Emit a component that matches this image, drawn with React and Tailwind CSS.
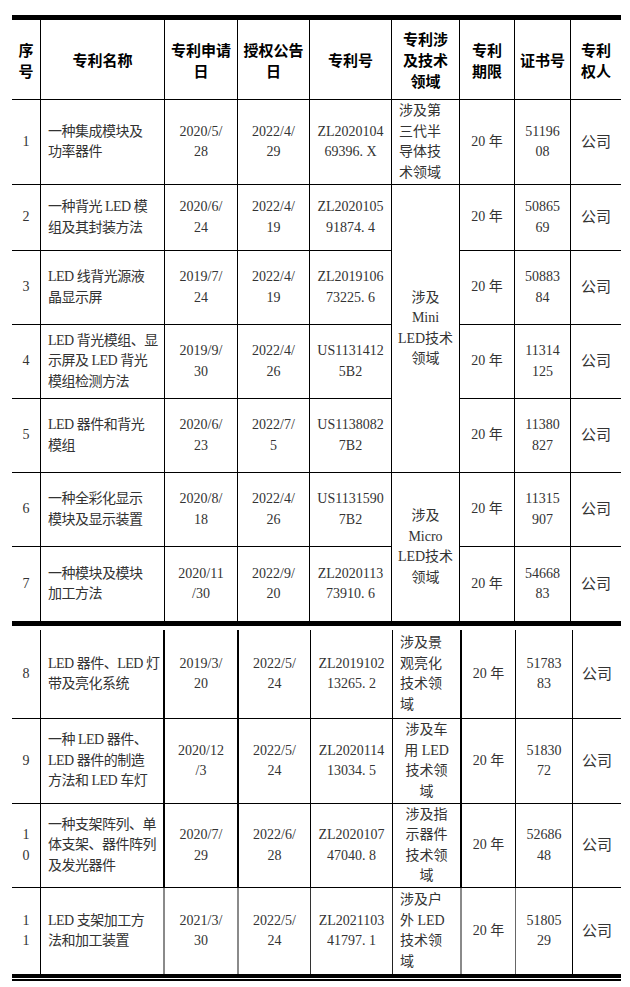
import React from 'react';

// patent list, split in two tables like the source page
const serif = "font-['Liberation_Serif','Noto_Sans_CJK_SC',serif]";

const head = [
  ['序', '号'],
  ['专利名称'],
  ['专利申请', '日'],
  ['授权公告', '日'],
  ['专利号'],
  ['专利涉', '及技术', '领域'],
  ['专利', '期限'],
  ['证书号'],
  ['专利', '权人'],
];

const topRows = [
  {
    no: ['1'], name: ['一种集成模块及', '功率器件'], apply: ['2020/5/', '28'], grant: ['2022/4/', '29'],
    num: ['ZL2020104', '69396. X'], field: { lines: ['涉及第', '三代半', '导体技', '术领域'], span: 1, left: true }, cert: ['51196', '08'],
  },
  {
    no: ['2'], name: ['一种背光 LED 模', '组及其封装方法'], apply: ['2020/6/', '24'], grant: ['2022/4/', '19'],
    num: ['ZL2020105', '91874. 4'], field: { lines: ['涉及', 'Mini', 'LED技术', '领域'], span: 4 }, cert: ['50865', '69'],
  },
  {
    no: ['3'], name: ['LED 线背光源液', '晶显示屏'], apply: ['2019/7/', '24'], grant: ['2022/4/', '19'],
    num: ['ZL2019106', '73225. 6'], field: null, cert: ['50883', '84'],
  },
  {
    no: ['4'], name: ['LED 背光模组、显', '示屏及 LED 背光', '模组检测方法'], apply: ['2019/9/', '30'], grant: ['2022/4/', '26'],
    num: ['US1131412', '5B2'], field: null, cert: ['11314', '125'],
  },
  {
    no: ['5'], name: ['LED 器件和背光', '模组'], apply: ['2020/6/', '23'], grant: ['2022/7/', '5'],
    num: ['US1138082', '7B2'], field: null, cert: ['11380', '827'],
  },
  {
    no: ['6'], name: ['一种全彩化显示', '模块及显示装置'], apply: ['2020/8/', '18'], grant: ['2022/4/', '26'],
    num: ['US1131590', '7B2'], field: { lines: ['涉及', 'Micro', 'LED技术', '领域'], span: 2 }, cert: ['11315', '907'],
  },
  {
    no: ['7'], name: ['一种模块及模块', '加工方法'], apply: ['2020/11', '/30'], grant: ['2022/9/', '20'],
    num: ['ZL2020113', '73910. 6'], field: null, cert: ['54668', '83'],
  },
];

const bottomRows = [
  {
    no: ['8'], name: ['LED 器件、LED 灯', '带及亮化系统'], apply: ['2019/3/', '20'], grant: ['2022/5/', '24'],
    num: ['ZL2019102', '13265. 2'], field: { lines: ['涉及景', '观亮化', '技术领', '域'], span: 1, left: true }, cert: ['51783', '83'],
  },
  {
    no: ['9'], name: ['一种 LED 器件、', 'LED 器件的制造', '方法和 LED 车灯'], apply: ['2020/12', '/3'], grant: ['2022/5/', '24'],
    num: ['ZL2020114', '13034. 5'], field: { lines: ['涉及车', '用 LED', '技术领', '域'], span: 1 }, cert: ['51830', '72'],
  },
  {
    no: ['1', '0'], name: ['一种支架阵列、单', '体支架、器件阵列', '及发光器件'], apply: ['2020/7/', '29'], grant: ['2022/6/', '28'],
    num: ['ZL2020107', '47040. 8'], field: { lines: ['涉及指', '示器件', '技术领', '域'], span: 1 }, cert: ['52686', '48'],
  },
  {
    no: ['1', '1'], name: ['LED 支架加工方', '法和加工装置'], apply: ['2021/3/', '30'], grant: ['2022/5/', '24'],
    num: ['ZL2021103', '41797. 1'], field: { lines: ['涉及户', '外 LED', '技术领', '域'], span: 1, left: true }, cert: ['51805', '29'],
  },
];

const Lines = ({ lines }) => (
  <div className="whitespace-nowrap">
    {lines.map((l, i) => (
      <div key={i}>{l}</div>
    ))}
  </div>
);

// one grid cell, borders drawn on right / bottom
const Cell = ({ lines, left, line, last, edge, extra = '' }) => (
  <div
    className={[
      'flex items-center',
      left ? 'justify-start pl-[7px] text-left' : 'justify-center text-center',
      last ? '' : 'border-b border-black',
      edge ? '' : line,
      extra,
    ].join(' ')}
  >
    <Lines lines={lines} />
  </div>
);

const Body = ({ rows, lines }) =>
  rows.map((r, i) => {
    const last = i === rows.length - 1;
    const endsLast = (span) => i + span === rows.length;
    return (
      <React.Fragment key={i}>
        <Cell lines={r.no} line={lines[0]} last={last} />
        <Cell lines={r.name} left line={lines[1]} last={last} extra="tracking-[-0.5px]" />
        <Cell lines={r.apply} line={lines[2]} last={last} />
        <Cell lines={r.grant} line={lines[3]} last={last} />
        <Cell lines={r.num} line={lines[4]} last={last} />
        {r.field && (
          <Cell
            lines={r.field.lines}
            left={r.field.left}
            line={lines[5]}
            last={endsLast(r.field.span)}
            extra={r.field.span === 4 ? 'row-span-4' : r.field.span === 2 ? 'row-span-2' : ''}
          />
        )}
        <Cell lines={['20 年']} line={lines[6]} last={last} />
        <Cell lines={r.cert} line={lines[7]} last={last} />
        <Cell lines={['公司']} edge last={last} extra="text-[15px]" />
      </React.Fragment>
    );
  });

const topLines = Array(8).fill('border-r border-black');
const bottomLines = [
  'border-r border-black',
  'border-r-2 border-[#8a8a8a]',
  'border-r-2 border-[#8a8a8a]',
  'border-r border-[#333]',
  'border-r border-[#222]',
  'border-r-2 border-[#8a8a8a]',
  'border-r border-[#666]',
  'border-r border-black',
];

export default function App() {
  return (
    <div className={`min-h-[987px] bg-white pl-[12px] pt-[15px] text-[14px] leading-[20.5px] text-[#333] ${serif}`}>
      <div className="w-[609px]">
        <div className="grid grid-cols-[29px_124px_73px_72px_82px_68px_55px_56px_50px] grid-rows-[80px_85px_66px_74px_74px_74px_74px_74px] border-y-[5px] border-black">
          {head.map((h, i) => (
            <div
              key={i}
              className={`flex items-center justify-center border-b border-black text-center font-['Noto_Sans_CJK_SC',sans-serif] text-[15px] font-bold leading-[21px] text-black ${i < 8 ? 'border-r' : ''}`}
            >
              <Lines lines={h} />
            </div>
          ))}
          <Body rows={topRows} lines={topLines} />
        </div>

        <div className="mt-[4px] grid grid-cols-[29px_124px_74px_72px_82px_69px_54px_57px_48px] grid-rows-[89px_85px_84px_86px] border-b-[4px] border-black">
          <Body rows={bottomRows} lines={bottomLines} />
        </div>
        <div className="mt-[1px] h-[1.5px] bg-black" />
      </div>
    </div>
  );
}
